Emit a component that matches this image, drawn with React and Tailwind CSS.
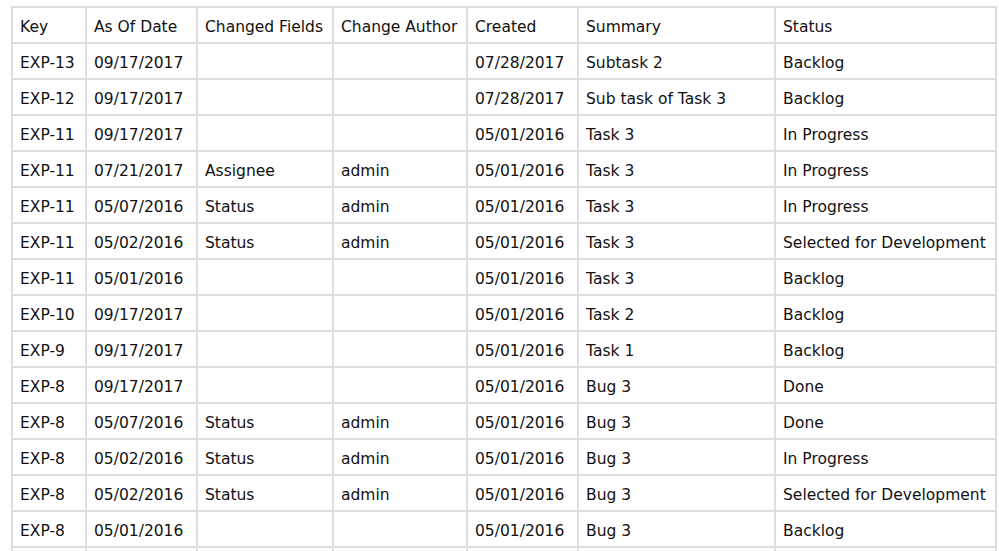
import React from "react";

const rows = [
  ["EXP-13", "09/17/2017", "", "", "07/28/2017", "Subtask 2", "Backlog"],
  ["EXP-12", "09/17/2017", "", "", "07/28/2017", "Sub task of Task 3", "Backlog"],
  ["EXP-11", "09/17/2017", "", "", "05/01/2016", "Task 3", "In Progress"],
  ["EXP-11", "07/21/2017", "Assignee", "admin", "05/01/2016", "Task 3", "In Progress"],
  ["EXP-11", "05/07/2016", "Status", "admin", "05/01/2016", "Task 3", "In Progress"],
  ["EXP-11", "05/02/2016", "Status", "admin", "05/01/2016", "Task 3", "Selected for Development"],
  ["EXP-11", "05/01/2016", "", "", "05/01/2016", "Task 3", "Backlog"],
  ["EXP-10", "09/17/2017", "", "", "05/01/2016", "Task 2", "Backlog"],
  ["EXP-9", "09/17/2017", "", "", "05/01/2016", "Task 1", "Backlog"],
  ["EXP-8", "09/17/2017", "", "", "05/01/2016", "Bug 3", "Done"],
  ["EXP-8", "05/07/2016", "Status", "admin", "05/01/2016", "Bug 3", "Done"],
  ["EXP-8", "05/02/2016", "Status", "admin", "05/01/2016", "Bug 3", "In Progress"],
  ["EXP-8", "05/02/2016", "Status", "admin", "05/01/2016", "Bug 3", "Selected for Development"],
  ["EXP-8", "05/01/2016", "", "", "05/01/2016", "Bug 3", "Backlog"],
  ["", "", "", "", "", "", ""],
];

const headers = ["Key", "As Of Date", "Changed Fields", "Change Author", "Created", "Summary", "Status"];

export default function App() {
  return (
    <div className="w-[999px] h-[551px] overflow-hidden bg-white pt-[6px] pl-[11px] text-[#111] text-[15.5px]" style={{ fontFamily: '"DejaVu Sans", Verdana, sans-serif' }}>
      <table className="table-fixed border-collapse w-[984px]">
        <colgroup>
          <col className="w-[74px]" />
          <col className="w-[111px]" />
          <col className="w-[136px]" />
          <col className="w-[134px]" />
          <col className="w-[111px]" />
          <col className="w-[197px]" />
          <col className="w-[221px]" />
        </colgroup>
        <thead>
          <tr className="h-[36px]">
            {headers.map((h) => (
              <th key={h} className="border-2 border-[#dedede] px-[7px] pt-[5px] pb-0 text-left font-normal align-middle whitespace-nowrap">{h}</th>
            ))}
          </tr>
        </thead>
        <tbody>
          {rows.map((r, i) => (
            <tr key={i} className="h-[36px]">
              {r.map((c, j) => (
                <td key={j} className="border-2 border-[#dedede] px-[7px] pt-[5px] pb-0 align-middle whitespace-nowrap">{c}</td>
              ))}
            </tr>
          ))}
        </tbody>
      </table>
    </div>
  );
}
